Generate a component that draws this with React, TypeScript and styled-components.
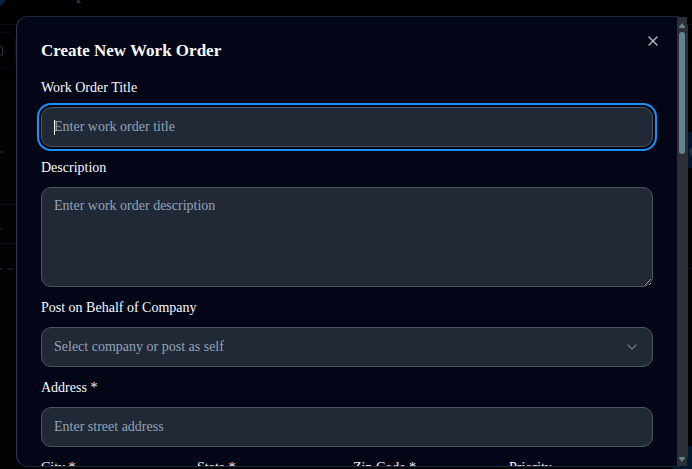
import React from "react";
import styled, { createGlobalStyle, css } from "styled-components";
import { ChevronDown, X } from "lucide-react";

const GlobalStyle = createGlobalStyle`
  *, *::before, *::after { box-sizing: border-box; }
  body {
    margin: 0;
    background: #020305;
    color: #f8fafc;
    font-family: "Liberation Serif", "Times New Roman", serif;
    font-size: 14px;
    overflow: hidden;
  }
`;

const Page = styled.main`
  position: relative;
  height: 100vh;
  padding: 16px 4px 2px 16px;
  overflow: hidden;
`;

const Backdrop = styled.div`
  position: absolute;
  inset: 0;
  background: linear-gradient(#000102, #020305 50%, #010204);
`;

const Bubble = styled.span<{ $corner: "start" | "end" }>`
  position: absolute;
  border-radius: 50%;
  ${(p) =>
    p.$corner === "start"
      ? css`
          left: -18px;
          top: -18px;
          width: 25px;
          height: 25px;
          background: #03233c;
        `
      : css`
          right: -32px;
          bottom: -28px;
          width: 52px;
          height: 52px;
          background: #03192d;
        `}
`;

const Rule = styled.span<{ $y: number; $end?: boolean }>`
  position: absolute;
  top: ${(p) => p.$y}px;
  ${(p) => (p.$end ? "right: 0;" : "left: 0;")}
  width: 16px;
  height: 1px;
  background: #0b0d11;
`;

const Dash = styled.span<{ $x: number; $y: number; $w: number }>`
  position: absolute;
  left: ${(p) => p.$x}px;
  top: ${(p) => p.$y}px;
  width: ${(p) => p.$w}px;
  height: 2px;
  background: #15171b;
`;

const BackButton = styled.span`
  position: absolute;
  left: -28px;
  top: 32px;
  width: 44px;
  height: 36px;
  border: 1px solid #0b0d11;
  border-radius: 10px;
  svg {
    position: absolute;
    right: 12px;
    top: 12px;
  }
`;

const BackHeading = styled.span`
  position: absolute;
  left: 76px;
  top: -17px;
  color: #35373b;
  font-size: 18px;
  font-weight: 700;
  line-height: 20px;
`;

const BackBadge = styled.span`
  position: absolute;
  right: -20px;
  top: 132px;
  width: 24px;
  height: 36px;
  padding-left: 1px;
  background: #04132c;
  color: #35404f;
  line-height: 38px;
`;

const Dialog = styled.section`
  position: relative;
  display: flex;
  height: 100%;
  border: 1px solid #1b273a;
  border-left-color: #2a3a55;
  border-right-color: #222f45;
  border-radius: 12px;
  background: #020617;
`;

const Body = styled.div`
  flex: 1;
  min-width: 0;
  padding: 24px;
  overflow-y: auto;
  scrollbar-width: none;
  border-radius: 11px 0 0 11px;
`;

const Title = styled.h2`
  margin: 0 0 18px;
  font-size: 17px;
  font-weight: 700;
  line-height: 20px;
`;

const Close = styled.button`
  position: absolute;
  top: 16px;
  right: 26px;
  display: flex;
  padding: 0;
  border: 0;
  background: none;
  color: #b4b7c0;
`;

const Form = styled.form`
  display: flex;
  flex-direction: column;
  gap: 12px;
`;

const Field = styled.div`
  display: flex;
  flex-direction: column;
  gap: 10px;
  min-width: 0;
`;

const Label = styled.label`
  font-size: 14px;
  font-weight: 500;
  line-height: 18px;
`;

const control = css`
  display: block;
  width: 100%;
  height: 40px;
  padding: 8px 12px;
  border: 1px solid #4b5563;
  border-radius: 10px;
  outline: none;
  background: #212936;
  color: #f8fafc;
  font: inherit;
  line-height: 20px;
  &::placeholder {
    color: #94a3b8;
    opacity: 1;
  }
`;

const ring = css`
  box-shadow: 0 0 0 2px #020617, 0 0 0 4px #1e90f5;
`;

const Input = styled.input`
  ${control}
  &:focus { ${ring} }
`;

const TextArea = styled.textarea`
  ${control}
  height: 100px;
  resize: vertical;
  &:focus { ${ring} }
`;

const Select = styled.select`
  ${control}
  appearance: none;
  color: #94a3b8;
  &:focus { ${ring} }
`;

const ControlWrap = styled.div`
  position: relative;
  > svg {
    position: absolute;
    right: 13px;
    top: 12px;
    color: #647082;
    pointer-events: none;
  }
`;

const Caret = styled.span`
  position: absolute;
  left: 13px;
  top: 13px;
  width: 1px;
  height: 15px;
  background: #fff;
  pointer-events: none;
`;

const FocusedInput = styled(Input)`
  caret-color: transparent;
`;

const Columns = styled.div`
  display: grid;
  grid-template-columns: repeat(4, minmax(0, 1fr));
  gap: 12px;
`;

const Rail = styled.div`
  display: flex;
  flex-direction: column;
  align-items: center;
  width: 10px;
  background: #2c3035;
`;

const Arrow = styled.svg`
  flex: none;
  width: 10px;
  height: 15px;
  fill: #628391;
`;

const Thumb = styled.div`
  width: 6px;
  height: 29%;
  border-radius: 3px;
  background: #628391;
`;

const Track = styled.div`
  flex: 1;
  display: flex;
  justify-content: center;
  min-height: 0;
`;

const details = [
  { id: "city", label: "City *" },
  { id: "state", label: "State *" },
  { id: "zip", label: "Zip Code *" },
];

export default function App() {
  return (
    <>
      <GlobalStyle />
      <Page>
        <Backdrop aria-hidden="true">
          <Bubble $corner="start" />
          <Bubble $corner="end" />
          <BackHeading>p</BackHeading>
          <Rule $y={24} />
          <Rule $y={24} $end />
          <BackButton>
            <svg width="12" height="12" viewBox="0 0 12 12" fill="none" stroke="#35373b">
              <rect x="0.5" y="1" width="11" height="10" rx="2" />
            </svg>
          </BackButton>
          <Dash $x={0} $y={151} $w={4} />
          <Rule $y={204} />
          <Dash $x={0} $y={228} $w={2} />
          <Rule $y={243} />
          <Dash $x={0} $y={268} $w={3} />
          <Dash $x={7} $y={268} $w={6} />
          <Rule $y={268} $end />
          <BackBadge>e</BackBadge>
        </Backdrop>
        <Dialog role="dialog" aria-modal="true" aria-labelledby="dialog-title">
          <Body>
            <Title id="dialog-title">Create New Work Order</Title>
            <Form>
              <Field>
                <Label htmlFor="title">Work Order Title</Label>
                <ControlWrap>
                  <FocusedInput id="title" placeholder="Enter work order title" autoFocus />
                  <Caret />
                </ControlWrap>
              </Field>
              <Field>
                <Label htmlFor="description">Description</Label>
                <TextArea id="description" placeholder="Enter work order description" />
              </Field>
              <Field>
                <Label htmlFor="company">Post on Behalf of Company</Label>
                <ControlWrap>
                  <Select id="company">
                    <option>Select company or post as self</option>
                  </Select>
                  <ChevronDown size={16} strokeWidth={2} />
                </ControlWrap>
              </Field>
              <Field>
                <Label htmlFor="address">Address *</Label>
                <Input id="address" placeholder="Enter street address" />
              </Field>
              <Columns>
                {details.map((d) => (
                  <Field key={d.id}>
                    <Label htmlFor={d.id}>{d.label}</Label>
                    <Input id={d.id} />
                  </Field>
                ))}
                <Field>
                  <Label htmlFor="priority">Priority</Label>
                  <Select id="priority" />
                </Field>
              </Columns>
            </Form>
          </Body>
          <Rail aria-hidden="true">
            <Arrow viewBox="0 0 10 15">
              <path d="M5 6 L8 10 V11 H2 V10 Z" />
            </Arrow>
            <Track>
              <Thumb />
            </Track>
            <Arrow viewBox="0 0 10 15">
              <path d="M5 11 L2 7 V6 H8 V7 Z" />
            </Arrow>
          </Rail>
          <Close type="button" aria-label="Close">
            <X size={16} strokeWidth={2} />
          </Close>
        </Dialog>
      </Page>
    </>
  );
}
